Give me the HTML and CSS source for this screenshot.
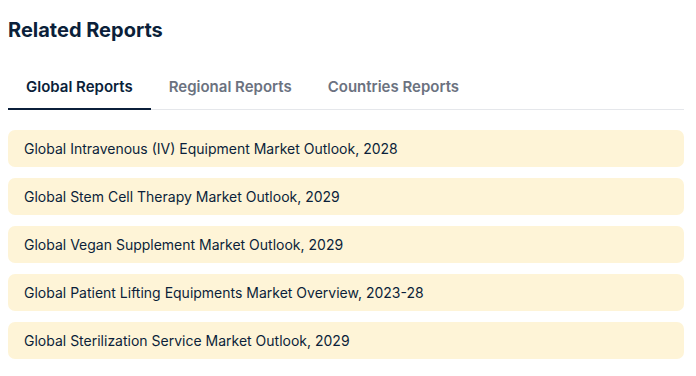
FILE: index.html
```html
<!DOCTYPE html>
<html lang="en">
<head>
  <meta charset="UTF-8">
  <title>Related Reports</title>
  <meta name="viewport" content="width=device-width, initial-scale=1">
  <link rel="stylesheet" href="styles.css">
</head>
<body>

<section class="related">
  <h2 class="title">Related Reports</h2>

  <div class="tabs">
    <button class="tab active">Global Reports</button>
    <button class="tab">Regional Reports</button>
    <button class="tab">Countries Reports</button>
  </div>

  <ul class="reports">
    <li><a href="#">Global Intravenous (IV) Equipment Market Outlook, 2028</a></li>
    <li><a href="#">Global Stem Cell Therapy Market Outlook, 2029</a></li>
    <li><a href="#">Global Vegan Supplement Market Outlook, 2029</a></li>
    <li><a href="#">Global Patient Lifting Equipments Market Overview, 2023-28</a></li>
    <li><a href="#">Global Sterilization Service Market Outlook, 2029</a></li>
  </ul>
</section>

</body>
</html>
```

FILE: styles.css
```css
body { margin: 0; font-family: Inter, "Noto Sans", sans-serif; background: #fff; color: #0b1f3a; }
.related { width: 676px; padding: 16px 0 0 8px; }
.title { margin: 0; font-size: 20px; font-weight: 700; line-height: 28px; color: #0b1f3a; }
.tabs { display: flex; margin-top: 26px; border-bottom: 1px solid #e5e7eb; }
.tab { font-family: inherit; font-size: 15px; font-weight: 600; color: #6b7280; background: none; border: none; padding: 7px 18px 12px; border-bottom: 2px solid transparent; margin-bottom: -1px; cursor: pointer; }
.tab.active { color: #0b1f3a; border-bottom-color: #0b1f3a; }
.reports { list-style: none; margin: 20px 0 0; padding: 0; display: flex; flex-direction: column; gap: 11px; }
.reports li { background: #fef4d7; border-radius: 7px; }
.reports a { display: block; padding: 10px 16px 9px; font-size: 14px; line-height: 18px; color: #0b1f3a; text-decoration: none; }
```
